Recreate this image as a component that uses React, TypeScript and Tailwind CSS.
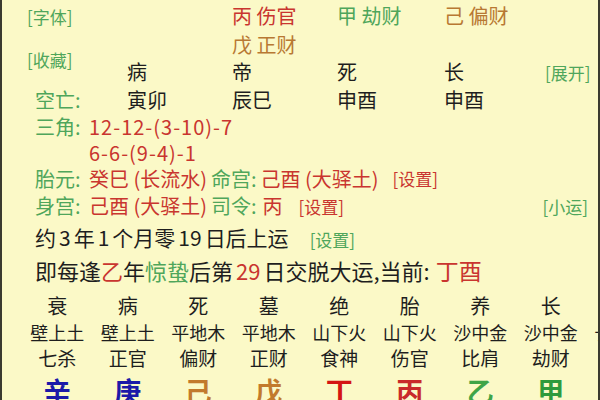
import React from 'react';

const green = 'text-[#4fa65b]';
const red = 'text-[#c9352f]';
const brown = 'text-[#b87833]';

const dayun = [
  { stage: '衰', nayin: '壁上土', god: '七杀', stem: '辛', color: 'text-[#1c1aa8]' },
  { stage: '病', nayin: '壁上土', god: '正官', stem: '庚', color: 'text-[#1c1aa8]' },
  { stage: '死', nayin: '平地木', god: '偏财', stem: '己', color: 'text-[#c27a2c]' },
  { stage: '墓', nayin: '平地木', god: '正财', stem: '戊', color: 'text-[#c27a2c]' },
  { stage: '绝', nayin: '山下火', god: '食神', stem: '丁', color: 'text-[#d41414]' },
  { stage: '胎', nayin: '山下火', god: '伤官', stem: '丙', color: 'text-[#c92a2a]' },
  { stage: '养', nayin: '沙中金', god: '比肩', stem: '乙', color: 'text-[#3fa447]' },
  { stage: '长', nayin: '沙中金', god: '劫财', stem: '甲', color: 'text-[#2f9a3c]' },
  { stage: '病', nayin: '长流水', god: '正官', stem: '癸', color: 'text-[#1c1aa8]' },
];

export default function App() {
  return (
    <div className="w-[600px] h-[400px] overflow-hidden bg-[#fbf9c7] border-x-2 border-[#3a3a30] font-['Noto_Sans_CJK_SC','Noto_Sans',sans-serif] text-[#1e1e1e] leading-none">
      {/* top grid */}
      <div className="grid grid-cols-[125px_105px_105px_107px_101px_1fr]">
        <div className={`h-[32px] flex items-center pl-[25px] text-[17px] ${green}`}>[字体]</div>
        <div />
        <div className={`flex items-center text-[20px] ${red}`}>丙 伤官</div>
        <div className={`flex items-center text-[20px] ${green}`}>甲 劫财</div>
        <div className={`flex items-center text-[20px] ${brown}`}>己 偏财</div>
        <div />

        <div className={`row-span-2 flex items-center pl-[25px] text-[17px] ${green}`}>[收藏]</div>
        <div className="h-[26px]" />
        <div className={`flex items-center text-[20px] ${brown}`}>戊 正财</div>
        <div />
        <div />
        <div />

        <div className="h-[28px] flex items-center text-[20px]">病</div>
        <div className="flex items-center text-[20px]">帝</div>
        <div className="flex items-center text-[20px]">死</div>
        <div className="flex items-center text-[20px]">长</div>
        <div className={`flex items-center text-[17px] ${green}`}>[展开]</div>

        <div className={`h-[27px] flex items-center pl-[33px] text-[20px] ${green}`}>空亡:</div>
        <div className="flex items-center text-[20px]">寅卯</div>
        <div className="flex items-center text-[20px]">辰巳</div>
        <div className="flex items-center text-[20px]">申酉</div>
        <div className="flex items-center text-[20px]">申酉</div>
        <div />
      </div>

      <div className="pl-[33px] text-[20px]">
        <div className="h-[27px] flex items-center">
          <span className={`w-[54px] ${green}`}>三角:</span>
          <span className={`tracking-[1px] ${red}`}>12-12-(3-10)-7</span>
        </div>
        <div className="h-[25px] flex items-center">
          <span className="w-[54px]" />
          <span className={`tracking-[1px] ${red}`}>6-6-(9-4)-1</span>
        </div>
        <div className="h-[27px] flex items-center">
          <span className={`w-[54px] ${green}`}>胎元:</span>
          <span className={red}>癸巳 (长流水)</span>
          <span className={`ml-[4px] ${green}`}>命宫:</span>
          <span className={`ml-[4px] ${red}`}>己酉 (大驿土)</span>
          <span className={`ml-[14px] text-[17px] ${red}`}>[设置]</span>
        </div>
        <div className="h-[28px] flex items-center pr-[10px]">
          <span className={`w-[54px] ${green}`}>身宫:</span>
          <span className={red}>己酉 (大驿土)</span>
          <span className={`ml-[4px] ${green}`}>司令:</span>
          <span className={`ml-[6px] ${red}`}>丙</span>
          <span className={`ml-[16px] text-[17px] ${red}`}>[设置]</span>
          <span className={`ml-auto text-[17px] ${green}`}>[小运]</span>
        </div>
        <div className="h-[34px] flex items-center text-[21px]">
          <span>约</span>
          <span className="mx-[3px]">3</span>
          <span>年</span>
          <span className="mx-[3px]">1</span>
          <span>个月零</span>
          <span className="mx-[3px]">19</span>
          <span>日后上运</span>
          <span className={`ml-[21px] mt-[4px] text-[17px] ${green}`}>[设置]</span>
        </div>
        <div className="h-[32px] flex items-center text-[22px]">
          <span>即每逢</span>
          <span className={red}>乙</span>
          <span>年</span>
          <span className={green}>惊蛰</span>
          <span>后第</span>
          <span className={`mx-[3px] ${red}`}>29</span>
          <span>日交脱大运,当前:</span>
          <span className={`ml-[6px] text-[23px] ${red}`}>丁酉</span>
        </div>
      </div>

      <div className="flex pl-[20px] mt-[6px]">
        {dayun.map((d, i) => (
          <div key={i} className="w-[70.5px] shrink-0 flex flex-col items-center">
            <div className="h-[28px] flex items-center text-[20px]">{d.stage}</div>
            <div className="h-[24px] flex items-center text-[18px] whitespace-nowrap">{d.nayin}</div>
            <div className="h-[26px] flex items-center text-[19px] whitespace-nowrap">{d.god}</div>
            <div className={`h-[40px] flex items-center text-[27px] font-bold ${d.color}`}>{d.stem}</div>
          </div>
        ))}
      </div>
    </div>
  );
}
